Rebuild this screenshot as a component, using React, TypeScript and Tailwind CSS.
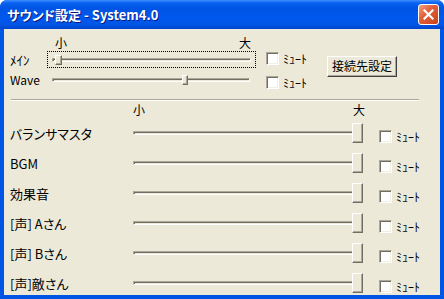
import React from "react";

const jp = "font-['Noto_Sans_CJK_JP',sans-serif]";

function Track({ className }: { className: string }) {
    return (
        <div className={`h-[4px] border border-t-[#ACA899] border-l-[#ACA899] border-r-white border-b-white bg-[#ECE9D8] shadow-[inset_1px_1px_0_#716F64] ${className}`} />
    );
}

function Thumb({ className }: { className: string }) {
    return (
        <div className={`absolute bg-[#ECE9D8] border border-t-white border-l-white border-r-[#716F64] border-b-[#716F64] shadow-[inset_-1px_-1px_0_#ACA899] ${className}`} />
    );
}

function Mute({ className }: { className: string }) {
    return (
        <div className={`flex items-center gap-[4px] ${className}`}>
            <div className="w-[13px] h-[13px] shrink-0 bg-white border border-t-[#ACA899] border-l-[#ACA899] border-r-white border-b-white shadow-[inset_1px_1px_0_#716F64,inset_-1px_-1px_0_#F1EFE2]" />
            <span className="text-[12px] leading-[13px] text-black">ﾐｭｰﾄ</span>
        </div>
    );
}

const channels = ["バランサマスタ", "BGM", "効果音", "[声] Aさん", "[声] Bさん", "[声]敵さん"];

export default function App() {
    return (
        <div className={`w-[444px] h-[299px] bg-white ${jp}`}>
            <div className="w-full h-full flex flex-col rounded-t-[7px] bg-[#0055E5] overflow-hidden">
                {/* title bar */}
                <div className="h-[29px] shrink-0 flex items-center justify-between pl-[7px] pr-[5px] bg-[linear-gradient(180deg,#3D8FFF_0%,#0A63F2_10%,#0054E3_28%,#0058EE_60%,#0055E5_85%,#0044CC_100%)]">
                    <div className="text-white font-bold text-[13px] leading-none [font-feature-settings:'palt'] [text-shadow:1px_1px_0_#0A1883]">
                        サウンド設定 - System4.0
                    </div>
                    <div className="w-[21px] h-[21px] rounded-[3px] border border-white bg-[linear-gradient(135deg,#F0A080_0%,#E2603A_40%,#C8421C_100%)] flex items-center justify-center">
                        <svg width="11" height="11" viewBox="0 0 11 11">
                            <path d="M1.5 1.5 L9.5 9.5 M9.5 1.5 L1.5 9.5" stroke="white" strokeWidth="2.2" strokeLinecap="square" />
                        </svg>
                    </div>
                </div>

                {/* client area */}
                <div className="flex-1 mx-[4px] mb-[4px] bg-[#ECE9D8] overflow-hidden text-black pt-[7px]">
                    <div className="grid grid-cols-[37px_209px_71px_70px] pl-[6px]">
                        <div />
                        <div className="h-[14px] flex justify-between pl-[8px] pr-[5px] text-[12px] leading-[14px]">
                            <span>小</span>
                            <span>大</span>
                        </div>
                        <div />
                        <div />

                        <div className="mt-[1px] h-[17px] flex items-center text-[13px]">ﾒｲﾝ</div>
                        <div className="mt-[1px] h-[17px] relative border border-dotted border-black flex items-center px-[4px]">
                            <Track className="w-full" />
                            <Thumb className="left-[7px] top-[3px] w-[7px] h-[10px]" />
                        </div>
                        <Mute className="mt-[2px] pl-[10px] self-start" />
                        <div className="row-span-2 mt-[2px]">
                            <button type="button" className="w-[70px] h-[21px] text-[12px] leading-none bg-[#ECE9D8] border border-t-white border-l-white border-r-[#404040] border-b-[#404040] shadow-[inset_-1px_-1px_0_#ACA899]">
                                接続先設定
                            </button>
                        </div>

                        <div className="mt-[4px] h-[15px] flex items-center text-[12px]">Wave</div>
                        <div className="mt-[4px] h-[15px] relative flex items-center pl-[5px] pr-[6px]">
                            <Track className="w-full" />
                            <Thumb className="left-[135px] top-[3px] w-[6px] h-[10px]" />
                        </div>
                        <Mute className="mt-[8px] pl-[10px] self-start" />
                    </div>

                    {/* separator */}
                    <div className="mt-[10px] ml-[7px] w-[408px] border-t border-t-[#ACA899] border-b border-b-white" />

                    <div className="mt-[2px] pl-[6px]">
                        <div className="h-[15px] flex pl-[123px]">
                            <div className="w-[232px] flex justify-between text-[12px] leading-[14px]">
                                <span>小</span>
                                <span>大</span>
                            </div>
                        </div>
                        {channels.map((name) => (
                            <div key={name} className="h-[30px] flex items-center">
                                <div className="w-[123px] text-[13px] leading-none [font-feature-settings:'palt']">{name}</div>
                                <div className="relative w-[230px] h-full flex items-center">
                                    <Track className="w-[224px]" />
                                    <Thumb className="left-[219px] top-[5px] w-[11px] h-[20px]" />
                                </div>
                                <Mute className="ml-[16px] self-start mt-[12px]" />
                            </div>
                        ))}
                    </div>
                </div>
            </div>
        </div>
    );
}
